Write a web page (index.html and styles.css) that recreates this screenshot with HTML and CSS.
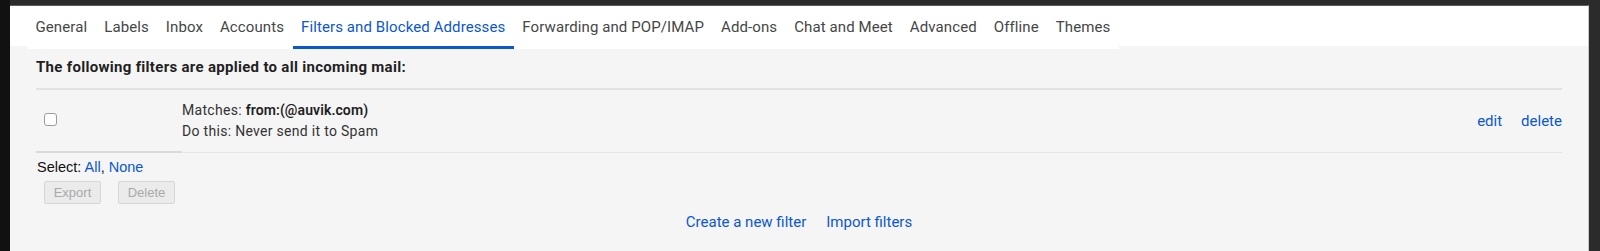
FILE: index.html
```html
<!DOCTYPE html>
<html lang="en">
<head>
    <meta charset="utf-8">
    <title>Settings - Filters and Blocked Addresses</title>
    <link rel="stylesheet" href="styles.css">
</head>
<body>
    <div class="screen">
        <div class="dock"></div>

        <div class="window">
            <!-- tabs -->
            <header class="tabbar">
                <nav class="tabs">
                    <a class="tab">General</a>
                    <a class="tab">Labels</a>
                    <a class="tab">Inbox</a>
                    <a class="tab">Accounts</a>
                    <a class="tab valgt">Filters and Blocked Addresses</a>
                    <a class="tab">Forwarding and POP/IMAP</a>
                    <a class="tab">Add-ons</a>
                    <a class="tab">Chat and Meet</a>
                    <a class="tab">Advanced</a>
                    <a class="tab">Offline</a>
                    <a class="tab">Themes</a>
                </nav>
            </header>

            <main class="content">
                <h2 class="intro">The following filters are applied to all incoming mail:</h2>

                <div class="filter-row">
                    <div class="cell-check"><input type="checkbox" class="check"></div>
                    <div class="cell-desc">
                        <p>Matches: <b>from:(@auvik.com)</b></p>
                        <p>Do this: Never send it to Spam</p>
                    </div>
                    <div class="cell-actions">
                        <a class="link">edit</a>
                        <a class="link">delete</a>
                    </div>
                </div>

                <p class="select">Select: <a class="link">All</a>, <a class="link">None</a></p>

                <div class="bulk">
                    <button class="btn" disabled>Export</button>
                    <button class="btn" disabled>Delete</button>
                </div>

                <div class="new-filter">
                    <a class="link">Create a new filter</a>
                    <a class="link">Import filters</a>
                </div>
            </main>
        </div>
    </div>
</body>
</html>
```

FILE: styles.css
```css
body {
    margin: 0;
    background-color: #2b2b2b;
    font-family: Roboto, "Liberation Sans", Arial, sans-serif;
    color: #222;
}

.screen {
    display: flex;
    height: 251px;
}

.dock {
    width: 10px;
    background-color: #111;
}

.window {
    width: 1578px;
    margin-top: 5px;
    border-top: 1px solid #5c5c5c;
    border-right: 1px solid #c8c8c8;
    background-color: #f5f5f5;
    display: flex;
    flex-direction: column;
}

/* tab bar */
.tabbar {
    height: 40px;
    background-color: white;
}

.tabs {
    display: inline-flex;
    height: 43px;
    margin-left: 17px;
    background-color: white;
    position: relative;
    z-index: 1;
}

.tab {
    padding: 0 8.5px;
    line-height: 43px;
    font-size: 15px;
    letter-spacing: 0.1px;
    color: #444746;
    white-space: nowrap;
}

.tab.valgt {
    color: #0b57d0;
    box-shadow: inset 0 -3px #0b57d0;
}

/* content */
.content {
    flex: 1;
    padding: 11px 26px 0 26px;
}

.intro {
    margin: 0 0 11px 0;
    font-size: 15px;
    letter-spacing: 0.3px;
    line-height: 20px;
    font-weight: bold;
    color: #1f1f1f;
}

.link {
    color: #0b57d0;
    cursor: pointer;
}

.filter-row {
    display: grid;
    grid-template-columns: 146px 1fr auto;
    border-top: 2px solid #e3e3e3;
}

.cell-check {
    padding: 23px 0 0 8px;
    border-bottom: 2px solid #dadada;
}

.check {
    appearance: none;
    display: block;
    width: 13px;
    height: 13px;
    margin: 0;
    border: 1px solid #9c9c9c;
    border-radius: 3px;
    background-color: white;
}

.cell-desc {
    padding: 10px 0;
    font-size: 14px;
    letter-spacing: 0.3px;
    line-height: 21px;
    color: #333;
    border-bottom: 1px solid #e6e6e6;
}

.cell-desc p {
    margin: 0;
}

.cell-desc b {
    color: #1f1f1f;
    font-weight: 600;
    letter-spacing: 0.1px;
}

.cell-actions {
    display: flex;
    align-items: center;
    gap: 19px;
    font-size: 15px;
    border-bottom: 1px solid #e6e6e6;
}

.select {
    margin: 4px 0 0 1px;
    font-family: "Liberation Sans", Arial, sans-serif;
    font-size: 14.5px;
    line-height: 20px;
    color: #111;
}

.bulk {
    display: flex;
    gap: 17px;
    margin: 4px 0 0 8px;
}

.btn {
    width: 57px;
    height: 23px;
    padding: 0;
    font-family: "Liberation Sans", Arial, sans-serif;
    font-size: 13px;
    color: #a9a9a9;
    background-color: #ebebeb;
    border: 1px solid #d6d6d6;
    border-radius: 2px;
}

.new-filter {
    display: flex;
    justify-content: center;
    gap: 20px;
    margin-top: 8px;
    font-size: 15px;
    line-height: 20px;
}
```
